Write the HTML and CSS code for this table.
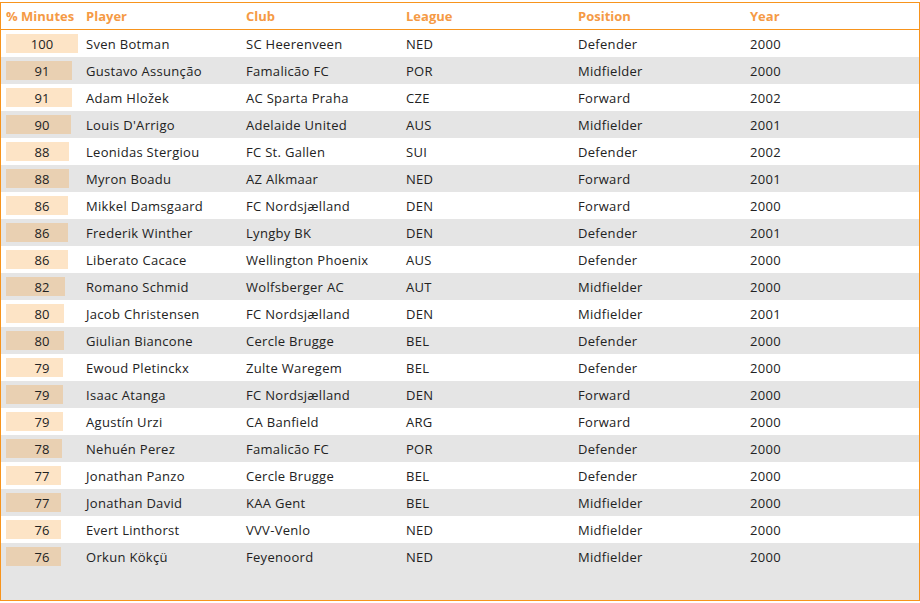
FILE: index.html
```html
<!DOCTYPE html>
<html>
<head>
<meta charset="utf-8">
<link rel="stylesheet" href="styles.css">
</head>
<body>
<div class="frame">
<table class="tbl">
<colgroup>
<col class="c-min"><col class="c-player"><col class="c-club"><col class="c-league"><col class="c-pos"><col class="c-year">
</colgroup>
<thead>
<tr><th class="h-min">% Minutes</th><th>Player</th><th>Club</th><th>League</th><th>Position</th><th>Year</th></tr>
</thead>
<tbody>
<tr><td class="min"><div class="bar" style="width:72px"></div><span>100</span></td><td>Sven Botman</td><td>SC Heerenveen</td><td>NED</td><td>Defender</td><td>2000</td></tr>
<tr><td class="min"><div class="bar" style="width:65.5px"></div><span>91</span></td><td>Gustavo Assunção</td><td>Famalicão FC</td><td>POR</td><td>Midfielder</td><td>2000</td></tr>
<tr><td class="min"><div class="bar" style="width:65.5px"></div><span>91</span></td><td>Adam Hložek</td><td>AC Sparta Praha</td><td>CZE</td><td>Forward</td><td>2002</td></tr>
<tr><td class="min"><div class="bar" style="width:64.8px"></div><span>90</span></td><td>Louis D'Arrigo</td><td>Adelaide United</td><td>AUS</td><td>Midfielder</td><td>2001</td></tr>
<tr><td class="min"><div class="bar" style="width:63.4px"></div><span>88</span></td><td>Leonidas Stergiou</td><td>FC St. Gallen</td><td>SUI</td><td>Defender</td><td>2002</td></tr>
<tr><td class="min"><div class="bar" style="width:63.4px"></div><span>88</span></td><td>Myron Boadu</td><td>AZ Alkmaar</td><td>NED</td><td>Forward</td><td>2001</td></tr>
<tr><td class="min"><div class="bar" style="width:61.9px"></div><span>86</span></td><td>Mikkel Damsgaard</td><td>FC Nordsjælland</td><td>DEN</td><td>Forward</td><td>2000</td></tr>
<tr><td class="min"><div class="bar" style="width:61.9px"></div><span>86</span></td><td>Frederik Winther</td><td>Lyngby BK</td><td>DEN</td><td>Defender</td><td>2001</td></tr>
<tr><td class="min"><div class="bar" style="width:61.9px"></div><span>86</span></td><td>Liberato Cacace</td><td>Wellington Phoenix</td><td>AUS</td><td>Defender</td><td>2000</td></tr>
<tr><td class="min"><div class="bar" style="width:59px"></div><span>82</span></td><td>Romano Schmid</td><td>Wolfsberger AC</td><td>AUT</td><td>Midfielder</td><td>2000</td></tr>
<tr><td class="min"><div class="bar" style="width:57.6px"></div><span>80</span></td><td>Jacob Christensen</td><td>FC Nordsjælland</td><td>DEN</td><td>Midfielder</td><td>2001</td></tr>
<tr><td class="min"><div class="bar" style="width:57.6px"></div><span>80</span></td><td>Giulian Biancone</td><td>Cercle Brugge</td><td>BEL</td><td>Defender</td><td>2000</td></tr>
<tr><td class="min"><div class="bar" style="width:56.9px"></div><span>79</span></td><td>Ewoud Pletinckx</td><td>Zulte Waregem</td><td>BEL</td><td>Defender</td><td>2000</td></tr>
<tr><td class="min"><div class="bar" style="width:56.9px"></div><span>79</span></td><td>Isaac Atanga</td><td>FC Nordsjælland</td><td>DEN</td><td>Forward</td><td>2000</td></tr>
<tr><td class="min"><div class="bar" style="width:56.9px"></div><span>79</span></td><td>Agustín Urzi</td><td>CA Banfield</td><td>ARG</td><td>Forward</td><td>2000</td></tr>
<tr><td class="min"><div class="bar" style="width:56.2px"></div><span>78</span></td><td>Nehuén Perez</td><td>Famalicão FC</td><td>POR</td><td>Defender</td><td>2000</td></tr>
<tr><td class="min"><div class="bar" style="width:55.4px"></div><span>77</span></td><td>Jonathan Panzo</td><td>Cercle Brugge</td><td>BEL</td><td>Defender</td><td>2000</td></tr>
<tr><td class="min"><div class="bar" style="width:55.4px"></div><span>77</span></td><td>Jonathan David</td><td>KAA Gent</td><td>BEL</td><td>Midfielder</td><td>2000</td></tr>
<tr><td class="min"><div class="bar" style="width:54.7px"></div><span>76</span></td><td>Evert Linthorst</td><td>VVV-Venlo</td><td>NED</td><td>Midfielder</td><td>2000</td></tr>
<tr><td class="min"><div class="bar" style="width:54.7px"></div><span>76</span></td><td>Orkun Kökçü</td><td>Feyenoord</td><td>NED</td><td>Midfielder</td><td>2000</td></tr>
</tbody>
</table>
</div>
</body>
</html>
```
FILE: styles.css
```css
html, body {
  margin: 0;
  padding: 0;
  background: #ffffff;
}
body {
  padding-top: 2px;
  font-family: "Open Sans", "Noto Sans", sans-serif;
  font-size: 13px;
  color: #222222;
}
.frame {
  box-sizing: border-box;
  width: 920px;
  height: 599px;
  border: 1px solid #f7941d;
  background: #e5e5e5;
}
.tbl {
  width: 918px;
  table-layout: fixed;
  border-collapse: collapse;
  border-spacing: 0;
}
.c-min { width: 80px; }
.c-player { width: 160px; }
.c-club { width: 160px; }
.c-league { width: 172px; }
.c-pos { width: 172px; }
.c-year { width: 174px; }
.tbl th {
  height: 26px;
  padding: 0 0 0 5px;
  text-align: left;
  font-weight: 700;
  color: #f59a45;
  background: #ffffff;
  border-bottom: 1px solid #f7941d;
  white-space: nowrap;
}
.tbl td {
  height: 27px;
  padding: 0 0 0 5px;
  white-space: nowrap;
  background: #ffffff;
  letter-spacing: 0.3px;
}
.tbl tbody tr:nth-child(even) td {
  background: #e5e5e5;
}
.tbl td.min {
  position: relative;
  padding: 0 3px 0 5px;
  text-align: center;
  letter-spacing: 0;
}
.bar {
  position: absolute;
  left: 5px;
  top: 4px;
  height: 19px;
  background: rgba(247, 148, 29, 0.25);
}
.min span {
  position: relative;
}
```
